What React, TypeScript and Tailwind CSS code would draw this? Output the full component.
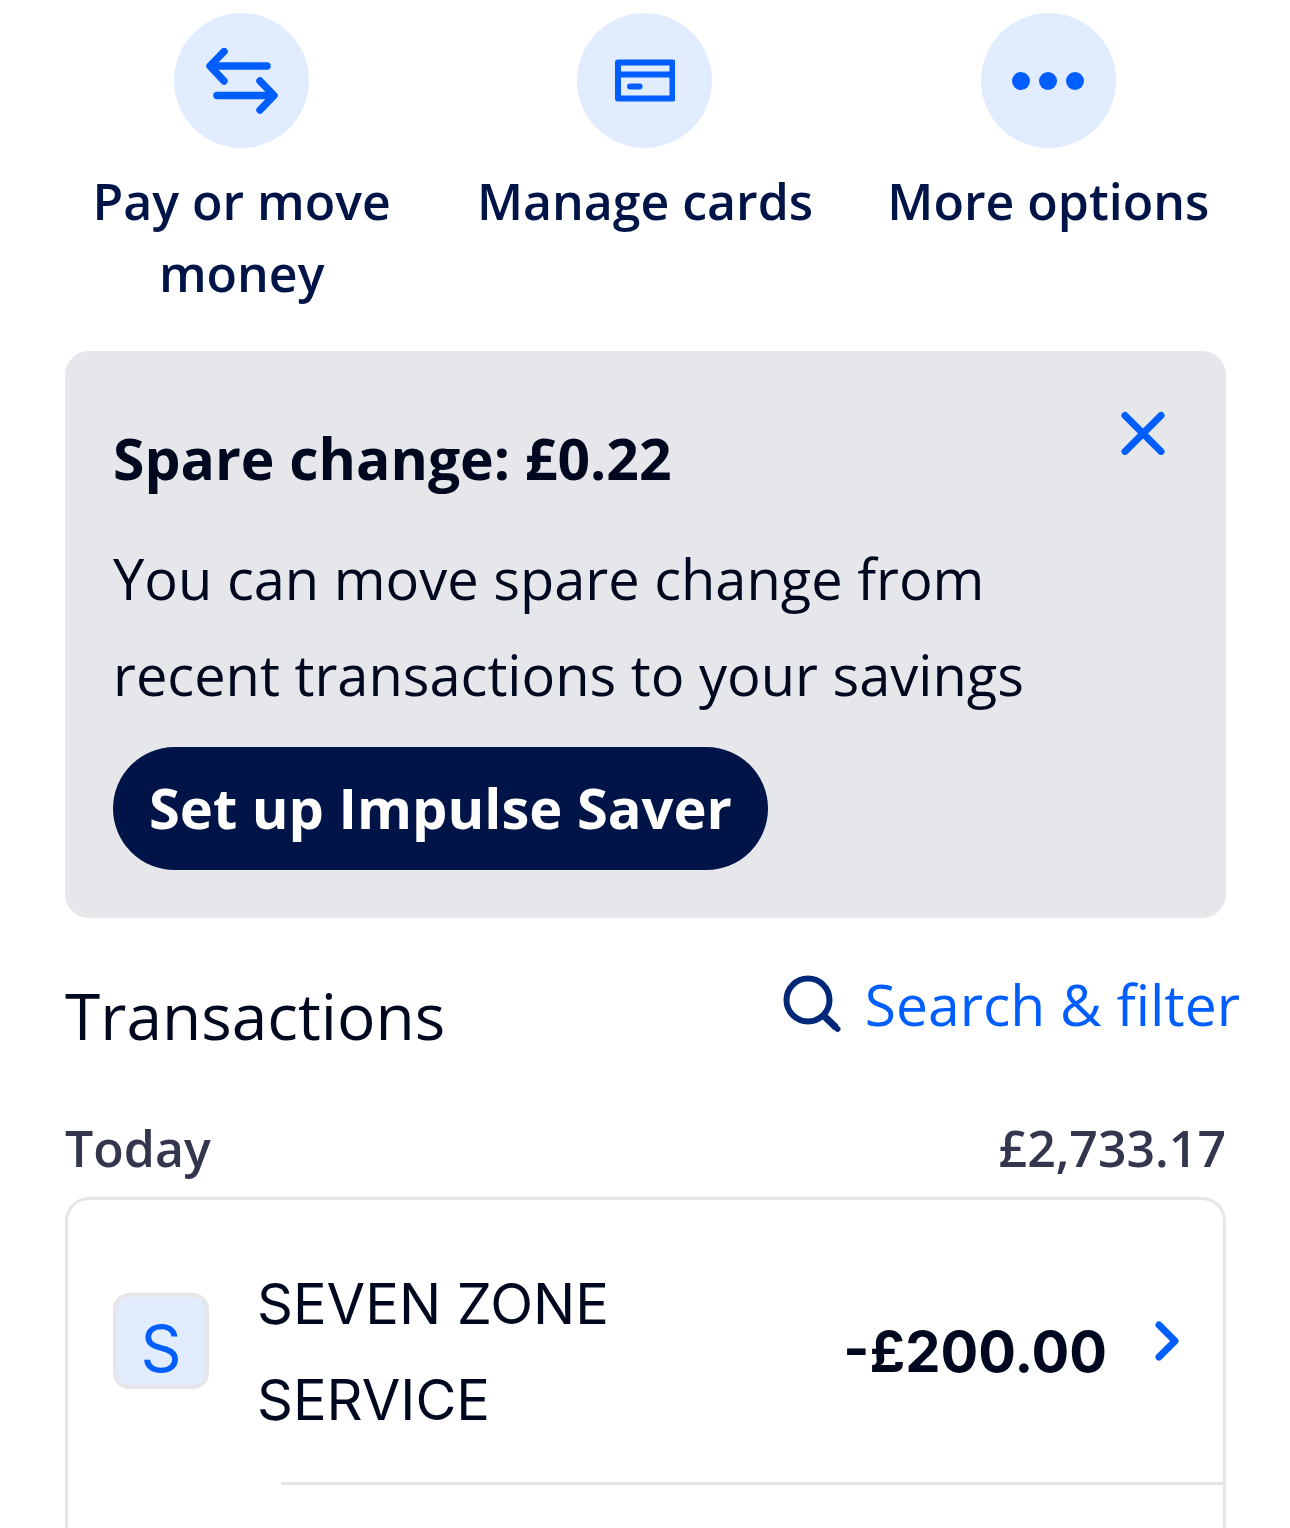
import type { ReactNode } from "react";

function TransferIcon() {
  return (
    <svg viewBox="0 0 72 66" className="h-[66px] w-[72px]" fill="none" stroke="currentColor" strokeWidth="7.5" strokeLinecap="round" strokeLinejoin="round" aria-hidden="true">
      <path d="M61 18H5" />
      <path d="M18 3.5L4 18L18 33" />
      <path d="M11 47.5H66" />
      <path d="M54 33L68 47.5L54 62" />
    </svg>
  );
}

function CardIcon() {
  return (
    <svg viewBox="0 0 60 44" className="h-11 w-[60px]" fill="none" stroke="currentColor" strokeWidth="6" strokeLinejoin="round" aria-hidden="true">
      <rect x="3" y="3.5" width="54.5" height="36" />
      <path d="M3 15.5H57" />
      <path d="M15 27.5H24.5" strokeLinecap="round" />
    </svg>
  );
}

function DotsIcon() {
  return (
    <svg viewBox="0 0 72 18" className="h-[18px] w-[72px]" fill="currentColor" aria-hidden="true">
      <circle cx="9" cy="9" r="9" />
      <circle cx="36" cy="9" r="9" />
      <circle cx="63" cy="9" r="9" />
    </svg>
  );
}

function Action({ label, children }: { label: string; children: ReactNode }) {
  return (
    <button type="button" className="flex flex-col items-center justify-start px-6 text-[#001447]">
      <span className="flex size-[135px] items-center justify-center rounded-full bg-[#e1edff] text-[#005eff]">{children}</span>
      <span className="mt-[17px] text-center text-[50px] leading-[72px] font-semibold">{label}</span>
    </button>
  );
}

export default function App() {
  return (
    <main className="h-screen overflow-hidden bg-white font-['Open_Sans',sans-serif] text-[#00081f]">
      <nav className="grid grid-cols-3 px-10 pt-[13px]" aria-label="Account actions">
        <Action label="Pay or move money"><TransferIcon /></Action>
        <Action label="Manage cards"><CardIcon /></Action>
        <Action label="More options"><DotsIcon /></Action>
      </nav>

      <section className="mt-[42px] mr-16 ml-[65px] flex items-start justify-between rounded-3xl bg-[#e6e7eb] p-12">
        <div>
          <h2 className="pt-[11px] text-[57px] leading-[96px] font-bold">Spare change: £0.22</h2>
          <p className="mt-6 text-[56px] leading-[96px]">
            You can move spare change from
            <br />
            recent transactions to your savings
          </p>
          <button type="button" className="mt-[25px] flex h-[123px] items-center rounded-full bg-[#001447] px-9 pb-1 text-[56px] leading-[96px] font-bold text-white">
            Set up Impulse Saver
          </button>
        </div>
        <button type="button" aria-label="Close" className="mt-3 mr-[13px] text-[#005eff]">
          <svg viewBox="0 0 44 44" className="size-11" fill="none" stroke="currentColor" strokeWidth="7" strokeLinecap="round" aria-hidden="true">
            <path d="M4 4.5L40 40.5M40 4.5L4 40.5" />
          </svg>
        </button>
      </section>

      <div className="mt-[46px] flex items-start justify-between pr-[50px] pl-[65px]">
        <h2 className="mt-2 text-[64px] leading-[88px]">Transactions</h2>
        <a href="#search" className="flex items-center gap-6 text-[57px] leading-[80px] text-[#005eff]">
          <svg viewBox="0 0 58 58" className="size-[58px] text-[#002878]" fill="none" stroke="currentColor" strokeWidth="6" aria-hidden="true">
            <circle cx="25" cy="25" r="21.5" />
            <path d="M40 40L53 52.5" strokeWidth="7" />
            <path d="M52 51.5L54.5 54" strokeLinecap="round" />
          </svg>
          Search &amp; filter
        </a>
      </div>

      <section className="mt-[52px] mr-16 ml-[65px]">
        <header className="flex justify-between text-[50px] leading-[72px] font-semibold text-[#33364d]">
          <h3>Today</h3>
          <span>£2,733.17</span>
        </header>
        <ul className="mt-[13px] min-h-[400px] rounded-t-3xl border-3 border-b-0 border-[#e6e6e6]">
          <li>
            <a href="#transaction" className="flex h-[282px] items-center pr-11 pl-[45px]">
              <span className="flex size-24 shrink-0 items-end justify-center rounded-2xl border-4 border-[#e6e6e8] bg-[#e1edff] font-[Inter,sans-serif] text-[64px] leading-[72px] text-[#005eff]">S</span>
              <span className="ml-12 w-[400px] pt-[22px] font-[Inter,sans-serif] text-[56px] leading-[96px]">SEVEN ZONE SERVICE</span>
              <span className="ml-auto pt-[22px] font-[Inter,sans-serif] text-[56px] leading-[96px] font-bold">-£200.00</span>
              <svg viewBox="0 0 24 40" className="ml-12 h-10 w-6 text-[#005eff]" fill="none" stroke="currentColor" strokeWidth="7" strokeLinecap="round" strokeLinejoin="round" aria-hidden="true">
                <path d="M4 4L20 20L4 36" />
              </svg>
            </a>
            <hr className="ml-[213px] border-t-3 border-[#e6e6e6]" />
          </li>
        </ul>
      </section>
    </main>
  );
}
